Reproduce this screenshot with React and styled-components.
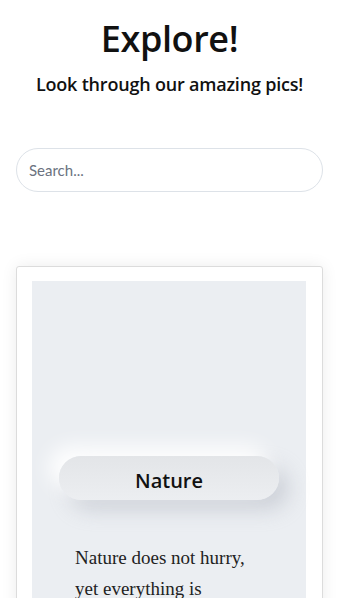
import React from 'react';
import styled, { createGlobalStyle } from 'styled-components';

const GlobalStyle = createGlobalStyle`
  html, body {
    margin: 0;
    padding: 0;
    background: #fff;
  }
  body {
    font-family: 'Open Sans', 'Noto Sans', sans-serif;
    color: #111;
    overflow: hidden;
  }
`;

const Page = styled.main`
  padding: 0 14px 0 16px;
  display: flex;
  flex-direction: column;
`;

const Header = styled.header`
  text-align: center;
  padding-top: 14px;
`;

const Title = styled.h1`
  margin: 0;
  font-size: 36px;
  font-weight: 600;
  line-height: 50px;
  letter-spacing: -0.4px;
`;

const Subtitle = styled.h2`
  margin: 8px 0 0;
  font-size: 18px;
  font-weight: 600;
  line-height: 24px;
  letter-spacing: -0.2px;
`;

const SearchInput = styled.input`
  margin-top: 52px;
  box-sizing: border-box;
  width: 100%;
  height: 44px;
  border: 1px solid #dde2e8;
  border-radius: 22px;
  padding: 0 12px;
  font-family: 'Lato', 'Open Sans', sans-serif;
  font-size: 15px;
  color: #333;
  outline: none;
  &::placeholder {
    color: #6b7280;
  }
`;

const Card = styled.article`
  margin-top: 74px;
  border: 1px solid #dcdcdc;
  border-radius: 3px;
  box-shadow: 0 0 16px rgba(0, 0, 0, 0.08);
  padding: 14px 16px 0 15px;
  background: #fff;
`;

const CardBody = styled.div`
  background: #ebeef2;
  display: flex;
  flex-direction: column;
  align-items: center;
  padding-top: 175px;
`;

const Tag = styled.div`
  width: 220px;
  height: 44px;
  border-radius: 22px;
  background: linear-gradient(180deg, #e3e5e8 0%, #eceef1 100%);
  box-shadow: -10px -10px 20px rgba(255, 255, 255, 0.95),
    10px 10px 20px rgba(170, 176, 186, 0.45);
  display: flex;
  align-items: center;
  justify-content: center;
  font-size: 20px;
  font-weight: 600;
  color: #111;
  padding-top: 4px;
  box-sizing: border-box;
`;

const Quote = styled.p`
  margin: 42px 0 0;
  align-self: stretch;
  padding: 0 40px 0 43px;
  font-family: 'Liberation Serif', serif;
  font-size: 19px;
  line-height: 31px;
  color: #222;
`;

export default function App() {
  return (
    <>
      <GlobalStyle />
      <Page>
        <Header>
          <Title>Explore!</Title>
          <Subtitle>Look through our amazing pics!</Subtitle>
        </Header>
        <SearchInput type="search" placeholder="Search..." />
        <Card>
          <CardBody>
            <Tag>Nature</Tag>
            <Quote>Nature does not hurry, yet everything is accomplished.</Quote>
          </CardBody>
        </Card>
      </Page>
    </>
  );
}
